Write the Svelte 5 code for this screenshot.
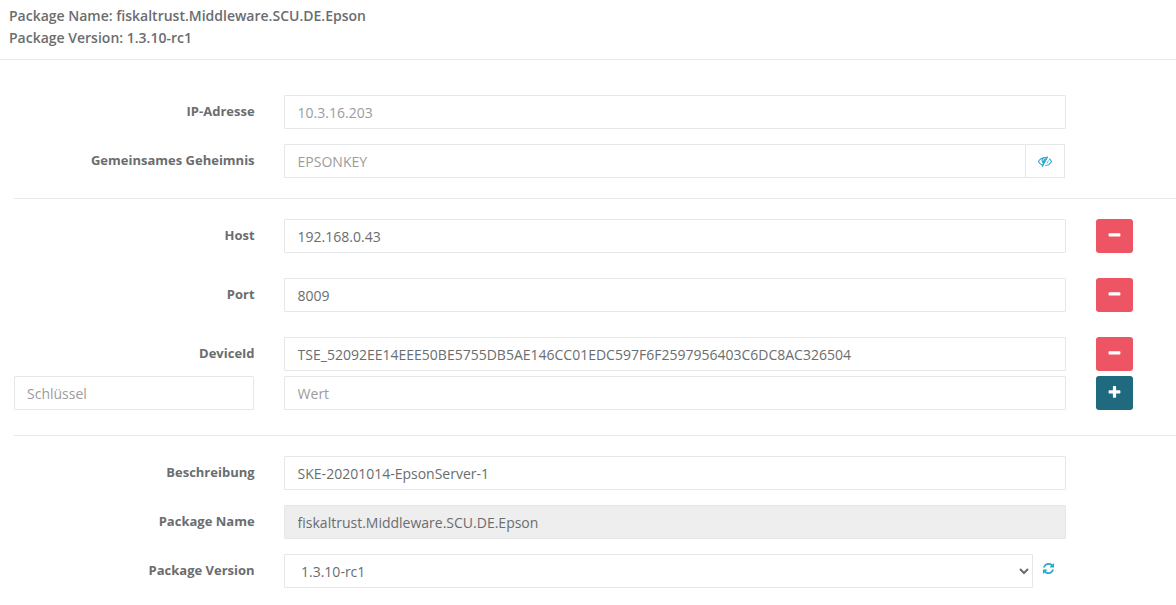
<script>
  const icons = {
    eyeSlash:
      'M555 1335l78-141q-87-63-136-159t-49-203q0-121 61-225-229 117-381 353 167 258 427 375zm389-759q0-20-14-34t-34-14q-125 0-214.5 89.5t-89.5 214.5q0 20 14 34t34 14 34-14 14-34q0-86 61-147t147-61q20 0 34-14t14-34zm363-191q0 7-1 9-106 189-316 567t-315 566l-49 89q-10 16-28 16-12 0-134-70-16-10-16-28 0-12 44-87-143-65-263.5-173t-208.5-245q-20-31-20-69t20-69q153-235 380-371t496-136q89 0 180 17l54-97q10-16 28-16 5 0 18 6t31 15.5 33 18.5 31.5 18.5 19.5 11.5q16 10 16 27zm37 447q0 139-79 253.5t-209 164.5l280-502q8 45 8 84zm448 128q0 35-20 69-39 64-109 145-150 172-347.5 267t-419.5 95l74-132q212-18 392.5-137t301.5-307q-115-179-282-294l63-112q95 64 182.5 153t144.5 184q20 34 20 69z',
    refresh:
      'M1639 1056q0 5-1 7-64 268-268 434.5t-478 166.5q-146 0-282.5-55t-243.5-157l-129 129q-19 19-45 19t-45-19-19-45v-448q0-26 19-45t45-19h448q26 0 45 19t19 45-19 45l-137 137q71 66 161 102t187 36q134 0 250-65t186-179q11-17 53-117 8-23 30-23h192q13 0 22.5 9.5t9.5 22.5zm25-800v448q0 26-19 45t-45 19h-448q-26 0-45-19t-19-45 19-45l138-138q-148-137-349-137-134 0-250 65t-186 179q-11 17-53 117-8 23-30 23h-199q-13 0-22.5-9.5t-9.5-22.5v-7q65-268 270-434.5t480-166.5q146 0 284 55.5t245 156.5l130-129q19-19 45-19t45 19 19 45z',
    minus:
      'M1600 736v192q0 40-28 68t-68 28h-1216q-40 0-68-28t-28-68v-192q0-40 28-68t68-28h1216q40 0 68 28t28 68z',
    plus:
      'M1600 736v192q0 40-28 68t-68 28h-416v416q0 40-28 68t-68 28h-192q-40 0-68-28t-28-68v-416h-416q-40 0-68-28t-28-68v-192q0-40 28-68t68-28h416v-416q0-40 28-68t68-28h192q40 0 68 28t28 68v416h416q40 0 68 28t28 68z'
  };

  let params = $state([
    { key: 'Host', value: '192.168.0.43' },
    { key: 'Port', value: '8009' },
    { key: 'DeviceId', value: 'TSE_52092EE14EEE50BE5755DB5AE146CC01EDC597F6F2597956403C6DC8AC326504' }
  ]);
  let newKey = $state('');
  let newValue = $state('');

  function remove(i) {
    params.splice(i, 1);
  }
  function add() {
    if (!newKey) return;
    params.push({ key: newKey, value: newValue });
    newKey = '';
    newValue = '';
  }
</script>

{#snippet icon(name)}
  <svg class="icon" viewBox="0 0 1792 1792" aria-hidden="true"><path d={icons[name]} /></svg>
{/snippet}

<header>
  <div>Package Name: fiskaltrust.Middleware.SCU.DE.Epson</div>
  <div>Package Version: 1.3.10-rc1</div>
</header>

<main>
  <section class="connection">
    <div class="row">
      <label for="ip">IP-Adresse</label>
      <input id="ip" placeholder="10.3.16.203" />
    </div>
    <div class="row">
      <label for="secret">Gemeinsames Geheimnis</label>
      <div class="group">
        <input id="secret" placeholder="EPSONKEY" />
        <button class="addon">{@render icon('eyeSlash')}</button>
      </div>
    </div>
  </section>

  <section class="params">
    {#each params as p, i}
      <div class="row">
        <label for="param-{i}">{p.key}</label>
        <input id="param-{i}" bind:value={p.value} />
        <button class="btn danger" onclick={() => remove(i)}>{@render icon('minus')}</button>
      </div>
    {/each}
    <div class="row new">
      <input class="key" placeholder="Schlüssel" bind:value={newKey} />
      <input placeholder="Wert" bind:value={newValue} />
      <button class="btn primary" onclick={add}>{@render icon('plus')}</button>
    </div>
  </section>

  <section class="package">
    <div class="row">
      <label for="desc">Beschreibung</label>
      <input id="desc" value="SKE-20201014-EpsonServer-1" />
    </div>
    <div class="row">
      <label for="pkg">Package Name</label>
      <input id="pkg" value="fiskaltrust.Middleware.SCU.DE.Epson" readonly />
    </div>
    <div class="row">
      <label for="version">Package Version</label>
      <div class="version">
        <select id="version"><option>1.3.10-rc1</option></select>
        <button class="link">{@render icon('refresh')}</button>
      </div>
    </div>
  </section>
</main>

<style>
  :global(body) {
    background: #fff;
    color: #6a6d6f;
    font-family: 'Open Sans', sans-serif;
    font-size: 13px;
    overflow: hidden;
  }
  header {
    box-sizing: border-box;
    height: 60px;
    padding: 5px 9px 0;
    border-bottom: 1px solid #e7eaec;
    font-size: 14px;
    font-weight: 600;
    line-height: 22px;
  }
  main {
    padding: 35px 0 0 14px;
  }
  section {
    display: flex;
    flex-direction: column;
    gap: 15px;
  }
  section + section {
    margin-top: 20px;
    padding-top: 20px;
    border-top: 1px solid #e7eaec;
  }
  .params {
    gap: 25px;
    padding-bottom: 5px;
  }
  .row {
    display: grid;
    grid-template-columns: 240px 782px 37px;
    column-gap: 30px;
    height: 34px;
  }
  .row.new {
    margin-top: -20px;
  }
  label {
    font-weight: 700;
    line-height: 18px;
    margin-right: -0.6px;
    padding-top: 7px;
    text-align: right;
  }
  input,
  select {
    box-sizing: border-box;
    width: 100%;
    height: 34px;
    margin: 0;
    padding: 6px 12px 6px 12.6px;
    border: 1px solid #e5e6e7;
    border-radius: 1px;
    background: #fff;
    color: inherit;
    font: 14px 'Open Sans', sans-serif;
    outline: none;
  }
  input.key {
    padding-left: 12px;
  }
  input::placeholder {
    color: #9c9c9c;
    opacity: 1;
  }
  input[readonly] {
    background: #eee;
  }
  button {
    display: flex;
    align-items: center;
    justify-content: center;
    margin: 0;
    padding: 0;
    border: 0;
    background: none;
    cursor: pointer;
  }
  .icon {
    display: block;
    width: 14px;
    height: 14px;
    fill: currentColor;
  }
  .group {
    display: flex;
    width: 781px;
  }
  .group input {
    flex: 1;
  }
  .addon {
    box-sizing: border-box;
    width: 39px;
    padding-left: 0.5px;
    border: 1px solid #e5e6e7;
    border-left: 0;
    color: #2ba9d0;
  }
  .btn {
    height: 34px;
    padding: 0 1px 1px 0;
    border-radius: 3px;
    color: #fff;
  }
  .btn .icon {
    width: 15px;
    height: 15px;
  }
  .danger {
    background: #ed5565;
  }
  .primary {
    background: #1f6a7f;
  }
  .version {
    display: flex;
    gap: 9px;
  }
  .version select {
    width: 749px;
    padding-left: 12px;
  }
  .link {
    height: 29px;
    color: #2ba9d0;
  }
  .link .icon {
    width: 13px;
    height: 13px;
  }
</style>
